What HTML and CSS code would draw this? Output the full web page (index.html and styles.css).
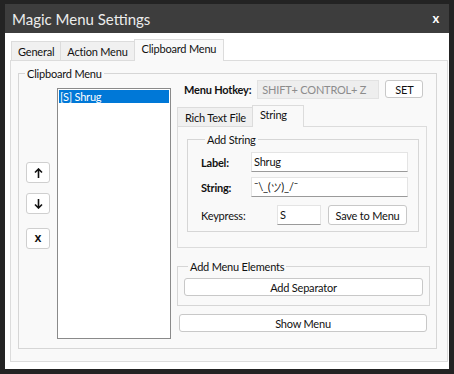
FILE: index.html
```html
<!DOCTYPE html>
<html lang="en">
<head>
    <meta charset="UTF-8">
    <title>Magic Menu Settings</title>
    <link rel="stylesheet" href="styles.css">
</head>
<body>
    <div class="window">
        <div class="titlebar">
            <span class="title">Magic Menu Settings</span>
            <span class="close">x</span>
        </div>
        <div class="content">
            <div class="tabs">
                <div class="tab">General</div>
                <div class="tab">Action Menu</div>
                <div class="tab active">Clipboard Menu</div>
            </div>
            <div class="tab-panel">
                <fieldset class="group main-group">
                    <legend>Clipboard Menu</legend>
                    <div class="side-buttons">
                        <button class="small-btn">
                            <svg width="9" height="10" viewBox="0 0 9 10"><path d="M4.5 1v9M1 4.5l3.5-3.5 3.5 3.5" fill="none" stroke="#111" stroke-width="1.6"/></svg>
                        </button>
                        <button class="small-btn">
                            <svg width="9" height="10" viewBox="0 0 9 10"><path d="M4.5 0v9M1 5.5l3.5 3.5 3.5-3.5" fill="none" stroke="#111" stroke-width="1.6"/></svg>
                        </button>
                        <button class="small-btn x-btn">X</button>
                    </div>
                    <div class="listbox">
                        <div class="list-item selected">[S] Shrug</div>
                    </div>
                    <div class="right-col">
                        <div class="hotkey-row">
                            <span class="bold-label">Menu Hotkey:</span>
                            <div class="hotkey-field">SHIFT+ CONTROL+ Z</div>
                            <button class="btn set-btn">SET</button>
                        </div>
                        <div class="tabs inner-tabs">
                            <div class="tab">Rich Text File</div>
                            <div class="tab active">String</div>
                        </div>
                        <div class="inner-panel">
                            <fieldset class="group string-group">
                                <legend>Add String</legend>
                                <div class="form-row">
                                    <span class="bold-label field-label">Label:</span>
                                    <div class="text-field wide">Shrug</div>
                                </div>
                                <div class="form-row">
                                    <span class="bold-label field-label">String:</span>
                                    <div class="text-field wide">¯\_(ツ)_/¯</div>
                                </div>
                                <div class="form-row keypress-row">
                                    <span class="key-label">Keypress:</span>
                                    <div class="text-field key-field">S</div>
                                    <button class="btn save-btn">Save to Menu</button>
                                </div>
                            </fieldset>
                        </div>
                        <fieldset class="group elements-group">
                            <legend>Add Menu Elements</legend>
                            <button class="btn wide-btn">Add Separator</button>
                        </fieldset>
                        <button class="btn wide-btn show-btn">Show Menu</button>
                    </div>
                </fieldset>
            </div>
        </div>
    </div>
</body>
</html>
```

FILE: styles.css
```css
body {
    margin: 0;
    background-color: #232323;
    font-family: Lato, "Noto Sans", sans-serif;
    font-size: 11px;
    letter-spacing: -0.2px;
    color: #111;
    padding: 4px 5px;
    white-space: nowrap;
}

.window {
    width: 444px;
    height: 365px;
    background-color: #fff;
    display: flex;
    flex-direction: column;
}

.titlebar {
    height: 32px;
    background-color: #3d3d3d;
    display: flex;
    align-items: center;
    justify-content: space-between;
    padding: 0 10px 0 7px;
}

.title {
    color: #ececec;
    font-size: 15px;
    letter-spacing: 0;
}

.close {
    color: #fff;
    font-weight: bold;
    font-size: 13px;
    margin-top: -2px;
}

.content {
    flex: 1;
    padding: 6px 1px 7px 5px;
    display: flex;
    flex-direction: column;
}

.tabs {
    display: flex;
    align-items: flex-end;
    padding-left: 1px;
    height: 21px;
}

.tab {
    height: 19px;
    line-height: 19px;
    padding: 0 6px;
    border: 1px solid #dcdcdc;
    border-bottom: none;
    background-color: #f0f0f0;
    margin-right: -1px;
    box-sizing: border-box;
    position: relative;
}

.tab.active {
    height: 22px;
    line-height: 18px;
    background-color: #f9f9f9;
    margin-bottom: -1px;
    padding: 0 7px;
    z-index: 1;
}

.tab-panel {
    flex: 1;
    border: 1px solid #dcdcdc;
    background-color: #f9f9f9;
    padding: 6px 10px 12px 7px;
}

.group {
    border: 1px solid #d6d6d6;
    margin: 0;
    padding: 0;
}

.group legend {
    padding: 0 2px;
    margin-left: 6px;
}

.main-group {
    height: 282px;
    box-sizing: border-box;
    display: flex;
    padding: 8px 0 0 7px;
}

.main-group > legend {
    margin-left: -1px;
}

.side-buttons {
    display: flex;
    flex-direction: column;
    gap: 10px;
    padding-top: 74px;
    width: 24px;
}

.side-buttons .small-btn + .small-btn + .small-btn {
    margin-top: 4px;
}

.small-btn {
    width: 24px;
    height: 21px;
    border: 1px solid #cfcfcf;
    border-radius: 3px;
    background-color: #fff;
    display: flex;
    align-items: center;
    justify-content: center;
    padding: 0;
}

.x-btn {
    font-family: "DejaVu Sans", sans-serif;
    font-weight: bold;
    font-size: 9px;
    color: #111;
}

.listbox {
    width: 114px;
    height: 251px;
    box-sizing: border-box;
    margin-left: 7px;
    border: 1px solid #8a8a8a;
    background-color: #fff;
    padding: 1px;
}

.list-item {
    height: 13px;
    line-height: 13px;
    padding-left: 1px;
}

.list-item.selected {
    background-color: #0078d7;
    color: #fff;
}

.right-col {
    margin-left: 6px;
    margin-top: -9px;
    width: 252px;
    display: flex;
    flex-direction: column;
}

.bold-label {
    font-weight: bold;
}

.hotkey-row {
    display: flex;
    align-items: center;
    height: 20px;
    padding-left: 7px;
}

.hotkey-field {
    width: 122px;
    height: 19px;
    box-sizing: border-box;
    margin-left: 6px;
    background-color: #eeeeee;
    border: 1px solid #e2e2e2;
    color: #8c8c8c;
    line-height: 17px;
    padding-left: 4px;
}

.set-btn {
    margin-left: 6px;
    width: 38px;
    height: 18px;
    font-size: 10.5px;
}

.btn {
    background-color: #fff;
    border: 1px solid #c8c8c8;
    border-radius: 3px;
    font-family: inherit;
    font-size: 11px;
    letter-spacing: -0.2px;
    color: #111;
    padding: 0;
}

.inner-tabs {
    margin-top: 6px;
    height: 21px;
    padding-left: 0;
}

.inner-tabs .tab {
    padding: 0 6px 0 7px;
}

.inner-tabs .tab.active {
    padding: 0 7px;
    width: 52px;
}

.inner-panel {
    width: 250px;
    height: 122px;
    box-sizing: border-box;
    border: 1px solid #dcdcdc;
    background-color: #f9f9f9;
    padding: 6px 7px 0 9px;
}

.string-group {
    height: 99px;
    box-sizing: border-box;
    padding: 6px 10px 0 13px;
    display: flex;
    flex-direction: column;
    gap: 5px;
}

.string-group > legend {
    margin-left: 4px;
}

.form-row {
    display: flex;
    align-items: center;
}

.field-label {
    width: 50px;
}

.text-field {
    height: 20px;
    box-sizing: border-box;
    background-color: #fff;
    border: 1px solid #e4e4e4;
    border-bottom: 1px solid #9a9a9a;
    line-height: 17px;
    padding-left: 2px;
}

.text-field.wide {
    width: 157px;
}

.keypress-row {
    margin-top: 3px;
}

.key-label {
    width: 76px;
}

.key-field {
    width: 44px;
}

.save-btn {
    margin-left: 7px;
    width: 79px;
    height: 20px;
}

.elements-group {
    margin-top: 12px;
    width: 253px;
    height: 46px;
    box-sizing: border-box;
    padding: 5px 6px 0 6px;
}

.elements-group > legend {
    margin-left: 4px;
}

.wide-btn {
    width: 239px;
    height: 18px;
    display: block;
}

.show-btn {
    margin-top: 8px;
    width: 248px;
    margin-left: 2px;
}
```
